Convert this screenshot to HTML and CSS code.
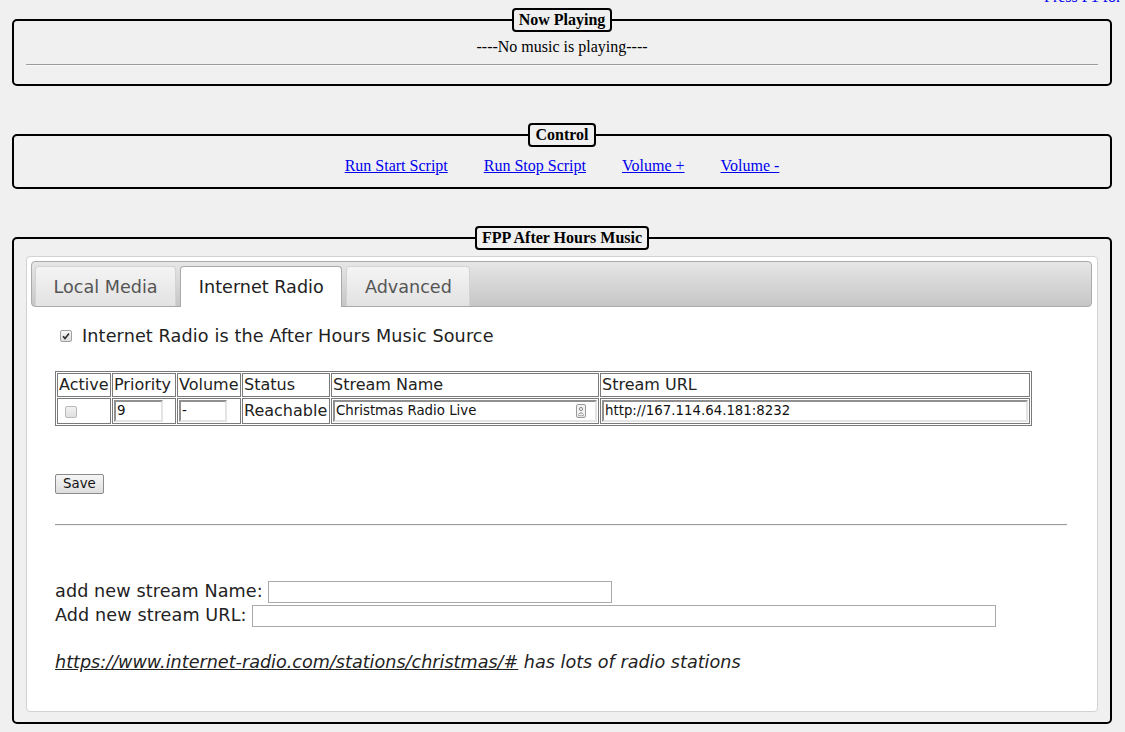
FILE: index.html
```html
<!DOCTYPE html>
<html>
<head>
<meta charset="utf-8">
<title>FPP After Hours Music</title>
<link rel="stylesheet" href="styles.css">
</head>
<body>
<a class="help" href="#">Press F1 for help</a>
<div class="page">
  <fieldset class="box">
    <legend>Now Playing</legend>
    <div class="now">----No music is playing----</div>
    <hr class="rule">
  </fieldset>

  <fieldset class="box box-gap">
    <legend>Control</legend>
    <div class="controls">
      <a href="#">Run Start Script</a>
      <a href="#">Run Stop Script</a>
      <a href="#">Volume +</a>
      <a href="#">Volume -</a>
    </div>
  </fieldset>

  <fieldset class="box box-gap">
    <legend>FPP After Hours Music</legend>
    <div class="tabs">
      <ul class="tabnav">
        <li class="tab"><a href="#">Local Media</a></li>
        <li class="tab active"><a href="#">Internet Radio</a></li>
        <li class="tab"><a href="#">Advanced</a></li>
      </ul>
      <div class="panel">
        <label class="source">
          <span class="cb cb-on"><svg viewBox="0 0 12 12" width="12" height="12"><path d="M3 6.2 L5 8.4 L9 3.4" fill="none" stroke="#2b2b2b" stroke-width="1.6"/></svg></span>
          <span>Internet Radio is the After Hours Music Source</span>
        </label>

        <table class="streams">
          <thead>
            <tr>
              <th class="c-active">Active</th>
              <th class="c-prio">Priority</th>
              <th class="c-vol">Volume</th>
              <th class="c-status">Status</th>
              <th class="c-name">Stream Name</th>
              <th class="c-url">Stream URL</th>
            </tr>
          </thead>
          <tbody>
            <tr>
              <td><span class="cb cb-off"></span></td>
              <td><input class="in in-prio" type="text" value="9"></td>
              <td><input class="in in-vol" type="text" value="-"></td>
              <td>Reachable</td>
              <td><span class="namewrap"><input class="in in-name" type="text" value="Christmas Radio Live"><svg class="fillicon" viewBox="0 0 10 14" width="10" height="14"><rect x="0.5" y="0.5" width="9" height="13" rx="1.5" fill="#f3f3f3" stroke="#9a9a9a"/><circle cx="5" cy="5" r="1.6" fill="none" stroke="#8a8a8a"/><path d="M2.5 10.5 Q5 7 7.5 10.5" fill="none" stroke="#8a8a8a"/><rect x="2" y="11.2" width="6" height="1" fill="#a5a5a5"/></svg></span></td>
              <td><input class="in in-url" type="text" value="http://167.114.64.181:8232"></td>
            </tr>
          </tbody>
        </table>

        <button class="save" type="button">Save</button>
        <hr class="divider">

        <div class="addrow">add new stream Name: <input class="add add-name" type="text"></div>
        <div class="addrow">Add new stream URL: <input class="add add-url" type="text"></div>

        <p class="hint"><a href="#">https://www.internet-radio.com/stations/christmas/#</a> has lots of radio stations</p>
      </div>
    </div>
  </fieldset>
</div>
</body>
</html>
```

FILE: styles.css
```css
html, body {
  margin: 0;
  padding: 0;
  background: #f0f0f0;
}

body {
  position: relative;
  overflow: hidden;
  font-family: "Liberation Serif", serif;
  font-size: 16px;
  color: #000;
}

.help {
  position: absolute;
  left: 1044px;
  top: -12px;
  white-space: nowrap;
  color: #0000ee;
  text-decoration: none;
}

.page {
  padding: 8px 13px 0 12px;
}

.box {
  margin: 0;
  min-width: 0;
  border: 2px solid #000;
  border-radius: 5px;
  padding: 5.6px 12px 10px;
}

.box-gap {
  margin-top: 37px;
}

.box legend {
  margin: 0 auto;
  padding: 1px 5px;
  border: 2px solid #000;
  border-radius: 4px;
  background: #f0f0f0;
  font-weight: bold;
  line-height: 18px;
}

.now {
  text-align: center;
  line-height: 18px;
}

.rule {
  height: 0;
  margin: 8px 0;
  border: 0;
  border-top: 1px solid #9c9c9c;
  border-bottom: 1px solid #f8f8f8;
}

.controls {
  display: flex;
  justify-content: center;
  gap: 36px;
  padding: 5px 0 2px;
  line-height: 18px;
}

.controls a {
  color: #0000ee;
}

/* tabs widget */
.tabs {
  background: #fff;
  border: 1px solid #d2d2d2;
  border-radius: 4px;
  padding: 4px 5px 4px 4px;
  font-family: "DejaVu Sans", Verdana, sans-serif;
  font-size: 17.6px;
  color: #222;
}

.tabnav {
  display: flex;
  list-style: none;
  margin: 0;
  padding: 3px 3px 0;
  border: 1px solid #aaa;
  border-radius: 4px;
  background: linear-gradient(#e6e6e6, #c6c6c6);
}

.tab {
  margin: 1px 4px 0 0;
  border: 1px solid #d3d3d3;
  border-bottom: 0;
  border-radius: 4px 4px 0 0;
  background: linear-gradient(#f4f4f4, #e2e2e2);
}

.tab a {
  display: block;
  padding: 8.8px 17.6px;
  line-height: 22px;
  color: #555;
  text-decoration: none;
}

.tab.active {
  margin-bottom: -1px;
  padding-bottom: 1px;
  border-color: #aaa;
  background: #fff;
}

.tab.active a {
  color: #212121;
}

.panel {
  padding: 17.6px 24.6px 17.6px 24px;
}

.source {
  display: flex;
  align-items: center;
  line-height: 22px;
  letter-spacing: 0.13px;
}

.cb {
  display: inline-block;
  box-sizing: border-box;
  width: 12px;
  height: 12px;
  border: 1px solid #a0a0a0;
  border-radius: 2px;
  background: linear-gradient(#f7f7f7, #dedede);
}

.cb svg {
  display: block;
  margin: -1px 0 0 -1px;
}

.source .cb {
  margin: 0 10px 0 5px;
}

.cb-off {
  width: 12px;
  height: 12px;
  margin: 2px 0 0 6px;
  border-color: #b8b8b8;
  background: linear-gradient(#f2f2f2, #e0e0e0);
  vertical-align: middle;
}

/* streams table */
.streams {
  margin-top: 24px;
  border: 1px solid #7a7a7a;
  border-spacing: 1px;
  font-family: "DejaVu Sans", Verdana, sans-serif;
  font-size: 16px;
  color: #222;
}

.streams th,
.streams td {
  border: 1px solid #7a7a7a;
  padding: 1px;
  text-align: left;
  font-weight: normal;
  white-space: nowrap;
}

.streams th {
  line-height: 20px;
}

.streams td {
  line-height: 22px;
  vertical-align: middle;
}

.c-active { width: 50px; }
.c-prio { width: 60px; }
.c-vol { width: 60px; }
.c-status { width: 84px; }
.c-name { width: 264px; }
.c-url { width: 426px; }

.in {
  display: block;
  box-sizing: border-box;
  height: 22px;
  margin: 0;
  padding: 0 1px;
  border: 2px inset #e4e4e4;
  background: #fff;
  font-family: "DejaVu Sans", Verdana, sans-serif;
  font-size: 13.33px;
  color: #111;
}

.in-prio { width: 49px; }
.in-vol { width: 48px; }
.in-name { width: 264px; }
.in-url { width: 426px; }

.namewrap {
  position: relative;
  display: block;
}

.fillicon {
  position: absolute;
  right: 11px;
  top: 4px;
}

.save {
  display: block;
  margin-top: 48px;
  height: 20px;
  padding: 0 7px;
  border: 1px solid #8a8a8a;
  border-radius: 2px;
  background: linear-gradient(#f6f6f6, #dddddd);
  font-family: "DejaVu Sans", Verdana, sans-serif;
  font-size: 13.33px;
  color: #111;
}

.divider {
  height: 0;
  margin: 30px 0 0;
  border: 0;
  border-top: 1px solid #9c9c9c;
  border-bottom: 1px solid #f2f2f2;
}

.addrow {
  line-height: 24px;
  height: 24px;
  letter-spacing: 0.1px;
}

.addrow:first-of-type {
  margin-top: 53px;
}

.add {
  box-sizing: border-box;
  height: 22px;
  margin: 0;
  padding: 0 2px;
  border: 1px solid #a9a9a9;
  background: #fff;
  vertical-align: middle;
  font-family: "DejaVu Sans", Verdana, sans-serif;
  font-size: 13.33px;
}

.add-name { width: 344px; }
.add-url { width: 744px; }

.hint {
  margin: 24px 0 16px;
  line-height: 22px;
  font-style: italic;
}

.hint a {
  color: #222;
}
```
